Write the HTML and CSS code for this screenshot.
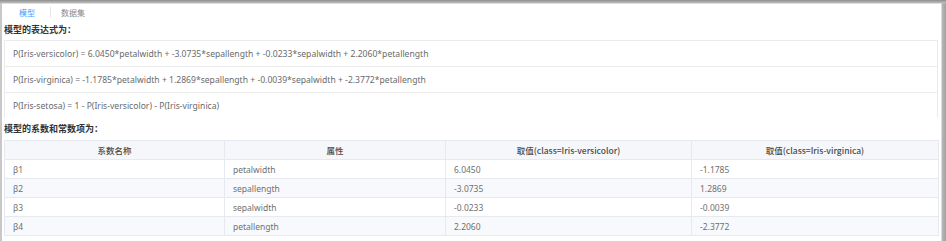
FILE: index.html
```html
<!DOCTYPE html>
<html lang="zh">
<head>
<meta charset="utf-8">
<link rel="stylesheet" href="styles.css">
</head>
<body>
<div class="frame">
  <div class="panel">
    <div class="tabs">
      <span class="tab active">模型</span>
      <span class="tab-sep"></span>
      <span class="tab">数据集</span>
    </div>
    <div class="title">模型的表达式为：</div>
    <div class="exprs">
      <div class="expr">P(Iris-versicolor) = 6.0450*petalwidth + -3.0735*sepallength + -0.0233*sepalwidth + 2.2060*petallength</div>
      <div class="expr">P(Iris-virginica) = -1.1785*petalwidth + 1.2869*sepallength + -0.0039*sepalwidth + -2.3772*petallength</div>
      <div class="expr last">P(Iris-setosa) = 1 - P(Iris-versicolor) - P(Iris-virginica)</div>
    </div>
    <div class="title title2">模型的系数和常数项为：</div>
    <table class="coef">
      <colgroup>
        <col class="c1"><col class="c2"><col class="c3"><col class="c4">
      </colgroup>
      <thead>
        <tr><th>系数名称</th><th>属性</th><th>取值(class=Iris-versicolor)</th><th>取值(class=Iris-virginica)</th></tr>
      </thead>
      <tbody>
        <tr><td>β1</td><td>petalwidth</td><td>6.0450</td><td>-1.1785</td></tr>
        <tr class="alt"><td>β2</td><td>sepallength</td><td>-3.0735</td><td>1.2869</td></tr>
        <tr><td>β3</td><td>sepalwidth</td><td>-0.0233</td><td>-0.0039</td></tr>
        <tr class="alt"><td>β4</td><td>petallength</td><td>2.2060</td><td>-2.3772</td></tr>
      </tbody>
    </table>
  </div>
</div>
</body>
</html>
```
FILE: styles.css
```css
html, body {
  margin: 0;
  padding: 0;
  height: 100%;
  overflow: hidden;
}
body {
  background: linear-gradient(to right, #c8c8c8 0, #c8c8c8 2px, #ffffff 2px, #ffffff 941px, #b8b8b8 942px, #a0a0a0 946px);
  font-family: "Noto Sans", "Noto Sans CJK SC", sans-serif;
  color: #606266;
}
.frame {
  height: 100%;
  padding-top: 4px;
  background: linear-gradient(to bottom, #8e8e8e 0, #bdbdbd 3px, transparent 4px);
  box-sizing: border-box;
}
.panel {
  margin: 0 5px 0 2px;
  background: #fff;
  height: 100%;
  padding: 0 3px 0 2px;
  box-sizing: border-box;
}
.tabs {
  display: flex;
  align-items: center;
  height: 16px;
  padding-left: 15px;
  font-family: "Noto Sans CJK SC", sans-serif;
  font-size: 8px;
}
.tab {
  color: #8a8a8a;
}
.tab.active {
  color: #409eff;
}
.tab-sep {
  width: 1px;
  height: 10px;
  background: #e4e4e4;
  margin: 0 10px 0 15px;
}
.title {
  font-family: "Noto Sans CJK SC", sans-serif;
  font-weight: bold;
  font-size: 9px;
  color: #333;
  height: 20px;
  line-height: 20px;
}
.title2 {
  height: 22px;
  line-height: 22px;
}
.exprs {
  border: 1px solid #ebebeb;
  border-bottom: none;
}
.expr {
  height: 25px;
  line-height: 27px;
  padding-left: 8px;
  font-size: 8.6px;
  color: #6a6a6a;
  border-bottom: 1px solid #ebebeb;
  white-space: nowrap;
}
.expr.last {
  border-bottom: none;
}
.coef {
  width: 934px;
  border-collapse: collapse;
  table-layout: fixed;
  font-size: 8.5px;
}
.c1 { width: 220px; }
.c2 { width: 221px; }
.c3 { width: 246px; }
.c4 { width: 247px; }
.coef th, .coef td {
  border: 1px solid #e6eaf0;
  height: 18px;
  padding: 0 0 0 8px;
  white-space: nowrap;
}
.coef td {
  padding-top: 1px;
  height: 17px;
}
.coef th {
  background: #f5f7fa;
  font-family: "Noto Sans CJK SC", sans-serif;
  font-weight: 500;
  color: #4a4a4a;
  text-align: center;
  padding: 0;
}
.coef td {
  color: #707070;
}
.coef tr.alt td {
  background: #f8f9fc;
}
```
